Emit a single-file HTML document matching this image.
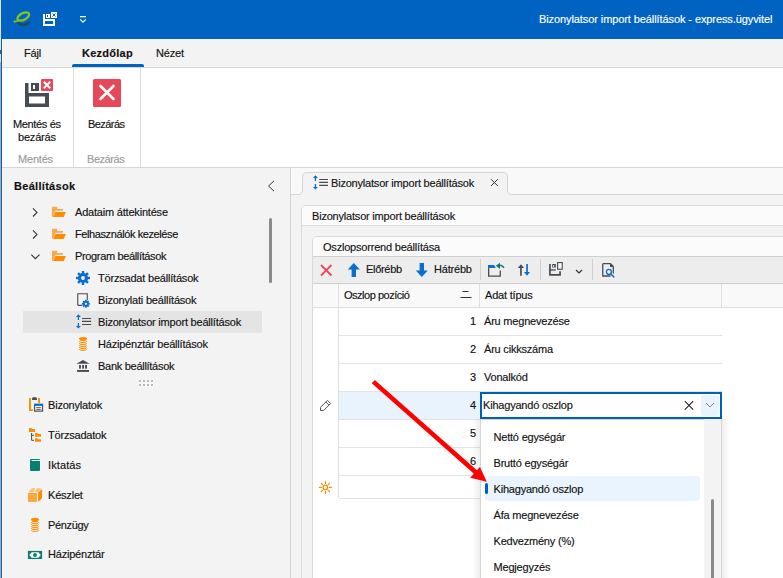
<!DOCTYPE html>
<html><head><meta charset="utf-8">
<style>
*{margin:0;padding:0;box-sizing:border-box}
html,body{width:783px;height:578px;overflow:hidden;background:#fff;font-family:"Liberation Sans",sans-serif;font-size:11px;color:#111;position:relative}
.a{position:absolute}
.t{position:absolute;white-space:nowrap;line-height:13px;letter-spacing:-0.2px;-webkit-text-stroke-width:0.15px}
svg{position:absolute;overflow:visible}
</style></head><body>
<!-- window edges -->
<div class="a" style="left:0;top:0;width:1px;height:578px;background:#a9a9a9"></div>
<div class="a" style="left:0;top:0;width:1px;height:62px;background:#e6e2dc"></div>
<div class="a" style="left:0;top:50px;width:1px;height:4px;background:#5a5550"></div>
<div class="a" style="left:1px;top:0;width:1px;height:578px;background:#0063c1"></div>
<div class="a" style="left:2px;top:39px;width:1px;height:539px;background:#fafafa"></div>
<!-- title bar -->
<div class="a" style="left:1px;top:0;width:782px;height:39px;background:#0063c1"></div>
<div class="t" style="left:539px;top:13px;color:#fff;letter-spacing:-0.09px">Bizonylatsor import beállítások - express.ügyvitel</div>
<!-- logo -->
<svg style="left:10px;top:8px" width="24" height="22" viewBox="0 0 24 22">
  <path d="M8.3 14.6 C 10.5 17.8, 16.5 18, 19.4 13.6" fill="none" stroke="#1f4a60" stroke-width="2.6"/>
  <ellipse cx="13.3" cy="8.5" rx="6.4" ry="3.3" transform="rotate(-28 13.3 8.5)" fill="none" stroke="#8cc51a" stroke-width="2.3"/>
  <path d="M4.5 13.6 L8.5 12.8" stroke="#8cc51a" stroke-width="1.4"/>
  <circle cx="4.6" cy="13.6" r="1.1" fill="#8cc51a"/>
</svg>
<!-- qat save-close -->
<svg style="left:38px;top:8px" width="24" height="22" viewBox="0 0 24 22">
  <path fill="#fff" fill-rule="evenodd" d="M5 6h2v5h10v7H5z M7 13v3h8v-3z"/>
  <path fill="#fff" fill-rule="evenodd" d="M8 6h4v4H8z M9 7v2h1V7z"/>
  <rect x="13" y="4" width="6" height="6" fill="#fff"/>
  <path d="M14.5 5.5l3 3M17.5 5.5l-3 3" stroke="#0063c1" stroke-width="1"/>
</svg>
<svg style="left:72px;top:8px" width="24" height="22" viewBox="0 0 24 22">
  <rect x="8" y="8" width="6" height="1.3" fill="#fff"/>
  <path d="M8.2 11.3l2.8 2.8 2.8-2.8" fill="none" stroke="#fff" stroke-width="1.2"/>
</svg>
<!-- tab bar -->
<div class="a" style="left:3px;top:39px;width:780px;height:28px;background:#f3f3f3"></div>
<div class="a" style="left:2px;top:67px;width:781px;height:1px;background:#d6d6d6"></div>
<div class="t" style="left:24px;top:47px">Fájl</div>
<div class="t" style="left:82px;top:47px;font-weight:bold;letter-spacing:0.25px">Kezdőlap</div>
<div class="t" style="left:156px;top:47px">Nézet</div>
<div class="a" style="left:72px;top:64px;width:72px;height:3px;background:#0063c1;border-radius:2px 2px 0 0"></div>
<!-- ribbon -->
<div class="a" style="left:3px;top:68px;width:780px;height:99px;background:#fff"></div>
<div class="a" style="left:2px;top:167px;width:781px;height:1px;background:#d6d6d6"></div>
<div class="a" style="left:73px;top:68px;width:1px;height:99px;background:#dcdcdc"></div>
<div class="a" style="left:140px;top:68px;width:1px;height:99px;background:#dcdcdc"></div>
<svg style="left:22px;top:76px" width="34" height="34" viewBox="0 0 34 34">
  <path fill="#474c52" fill-rule="evenodd" d="M3 7h3.5v10H27v14H3z M7 20.5v7h16v-7z"/>
  <path fill="#474c52" fill-rule="evenodd" d="M9 7h8v8H9z M11 9v4h2V9z"/>
  <rect x="19" y="3" width="12" height="12" rx="1" fill="#e8485a"/>
  <path d="M21.8 5.8l6.4 6.4M28.2 5.8l-6.4 6.4" stroke="#fff" stroke-width="2"/>
</svg>
<div class="t" style="left:13px;top:118px;letter-spacing:-0.35px">Mentés és</div>
<div class="t" style="left:18px;top:131px">bezárás</div>
<div class="t" style="left:18px;top:153px;color:#9a9a9a">Mentés</div>
<svg style="left:93px;top:79px" width="28" height="28" viewBox="0 0 28 28">
  <rect x="0" y="0" width="28" height="28" rx="1.5" fill="#e64759"/>
  <path d="M7.5 7l13 13M20.5 7l-13 13" stroke="#fff" stroke-width="2.6" stroke-linecap="round"/>
</svg>
<div class="t" style="left:88px;top:118px;letter-spacing:-0.55px">Bezárás</div>
<div class="t" style="left:87px;top:153px;color:#9a9a9a;letter-spacing:-0.45px">Bezárás</div>
<!-- sidebar -->
<div class="a" style="left:3px;top:168px;width:287px;height:410px;background:#f3f3f3"></div>
<div class="a" style="left:290px;top:168px;width:1px;height:410px;background:#d4d4d4"></div>
<div class="t" style="left:14px;top:180px;font-weight:bold;letter-spacing:0.3px">Beállítások</div>

<!-- sidebar tree -->
<div class="a" style="left:23px;top:311px;width:239px;height:22px;background:#e4e4e4"></div>
<svg style="left:28px;top:202px" width="16" height="66" viewBox="0 0 16 66">
  <path d="M5 6.3l4 4.1-4 4.1" fill="none" stroke="#333" stroke-width="1.1"/>
  <path d="M5 28.3l4 4.1-4 4.1" fill="none" stroke="#333" stroke-width="1.1"/>
  <path d="M3.3 52.6l4.1 4.1 4.1-4.1" fill="none" stroke="#333" stroke-width="1.1"/>
</svg>
<svg style="left:51px;top:206px" width="16" height="56" viewBox="0 0 16 56">
  <g id="fld"><path d="M1 0.8H6.2V2.9H12V4.8H4.6L2.6 9.6V10.8H1z" fill="#faa84a"/><path d="M4.4 6H15L12.7 10.9H2.2z" fill="#ff8c00"/></g>
  <use href="#fld" y="22"/><use href="#fld" y="44"/>
</svg>
<div class="t" style="left:75px;top:206px">Adataim áttekintése</div>
<div class="t" style="left:75px;top:228px;letter-spacing:-0.4px">Felhasználók kezelése</div>
<div class="t" style="left:75px;top:250px;letter-spacing:-0.35px">Program beállítások</div>
<!-- child icons -->
<svg style="left:74px;top:268px" width="20" height="108" viewBox="0 0 20 108">
  <g transform="translate(9 10)" fill="#0a6ed1">
    <circle r="5.1"/>
    <g id="tooth"><rect x="-1.2" y="-7" width="2.4" height="3"/></g>
    <use href="#tooth" transform="rotate(45)"/><use href="#tooth" transform="rotate(90)"/><use href="#tooth" transform="rotate(135)"/>
    <use href="#tooth" transform="rotate(180)"/><use href="#tooth" transform="rotate(225)"/><use href="#tooth" transform="rotate(270)"/><use href="#tooth" transform="rotate(315)"/>
    <circle r="1.9" fill="#f3f3f3"/>
  </g>
  <path d="M3.75 37.35V25.75H13.25V32.5 M3.75 37.35H8.5" fill="none" stroke="#474c52" stroke-width="1.1"/>
  <g transform="translate(11.9 35.8)" fill="#0a6ed1">
    <circle r="3.6" fill="#f3f3f3"/>
    <circle r="2.7"/>
    <rect x="-0.9" y="-3.9" width="1.8" height="7.8"/><rect x="-3.9" y="-0.9" width="7.8" height="1.8"/>
    <rect x="-0.9" y="-3.9" width="1.8" height="7.8" transform="rotate(45)"/><rect x="-0.9" y="-3.9" width="1.8" height="7.8" transform="rotate(-45)"/>
    <circle r="1.1" fill="#f3f3f3"/>
  </g>
  <!-- updown list -->
  <g>
    <path d="M4.4 48.5v3.6M4.4 54.9v3.6" stroke="#0a6ed1" stroke-width="1.3"/>
    <path d="M1.9 48.9L4.4 46.3 6.9 48.9z M1.9 58L4.4 60.6 6.9 58z" fill="#0a6ed1"/>
    <path d="M8 50.5h9.1M8 53.4h9.1M8 56.5h9.1" stroke="#474c52" stroke-width="1.2"/>
  </g>
  <!-- coins -->
  <g fill="none" stroke="#ff8c00" stroke-width="1"><ellipse cx="9" cy="81.4" rx="3.55" ry="0.95" fill="#fff"/><ellipse cx="9" cy="79.4" rx="3.55" ry="0.95" fill="#fff"/><ellipse cx="9" cy="77.4" rx="3.55" ry="0.95" fill="#fff"/><ellipse cx="9" cy="75.4" rx="3.55" ry="0.95" fill="#fff"/><ellipse cx="9" cy="73.5" rx="3.55" ry="0.95" fill="#fff"/><ellipse cx="9" cy="70.8" rx="4.05" ry="1.75" fill="#ff8c00" stroke="none"/></g>
  <!-- bank -->
  <g fill="#474c52">
    <path d="M2.4 95.8L9 91.9 15.6 95.8z"/>
    <rect x="5.1" y="97" width="1.8" height="3.7"/><rect x="8.2" y="97" width="1.8" height="3.7"/><rect x="11.1" y="97" width="1.9" height="3.7"/>
    <rect x="3" y="102" width="12" height="1.9"/>
  </g>
</svg>
<div class="t" style="left:98px;top:272px">Törzsadat beállítások</div>
<div class="t" style="left:98px;top:294px">Bizonylati beállítások</div>
<div class="t" style="left:98px;top:316px">Bizonylatsor import beállítások</div>
<div class="t" style="left:98px;top:338px">Házipénztár beállítások</div>
<div class="t" style="left:98px;top:360px;letter-spacing:-0.28px">Bank beállítások</div>
<!-- scrollbar -->
<div class="a" style="left:269px;top:218px;width:3px;height:64.5px;background:#8a8a8a;border-radius:2px"></div>
<!-- collapse chevron -->
<svg style="left:262px;top:178px" width="16" height="16" viewBox="0 0 16 16">
  <path d="M12 2.8L6.6 8l5.4 5.2" fill="none" stroke="#333" stroke-width="1"/>
</svg>
<!-- grip -->
<svg style="left:138px;top:379px" width="18" height="8" viewBox="0 0 18 8">
  <g fill="#fff"><rect x="0.5" y="0.5" width="3" height="3"/><rect x="4.5" y="0.5" width="3" height="3"/><rect x="8.5" y="0.5" width="3" height="3"/><rect x="12.5" y="0.5" width="3" height="3"/>
  <rect x="0.5" y="4.5" width="3" height="3"/><rect x="4.5" y="4.5" width="3" height="3"/><rect x="8.5" y="4.5" width="3" height="3"/><rect x="12.5" y="4.5" width="3" height="3"/></g>
  <g fill="#8f8f8f"><rect x="1.2" y="1.2" width="1.6" height="1.6"/><rect x="5.2" y="1.2" width="1.6" height="1.6"/><rect x="9.2" y="1.2" width="1.6" height="1.6"/><rect x="13.2" y="1.2" width="1.6" height="1.6"/>
  <rect x="1.2" y="5.2" width="1.6" height="1.6"/><rect x="5.2" y="5.2" width="1.6" height="1.6"/><rect x="9.2" y="5.2" width="1.6" height="1.6"/><rect x="13.2" y="5.2" width="1.6" height="1.6"/></g>
</svg>
<!-- nav -->
<svg style="left:26px;top:395px" width="20" height="170" viewBox="0 0 20 170">
  <!-- bizonylatok -->
  <g>
    <path d="M3 3h1.9v11.2h2v1.7H3z" fill="#ff8c00"/>
    <rect x="12.1" y="3" width="1.9" height="5" fill="#ff8c00"/>
    <path d="M6.1 4.9V3.4Q6.1 2.2 7.3 2.2H9.7Q10.9 2.2 10.9 3.4V4.9z" fill="#474c52"/>
    <rect x="8.6" y="9.4" width="7.9" height="6.7" fill="#fff" stroke="#474c52" stroke-width="1.2"/>
    <rect x="8" y="8.8" width="9.1" height="2.1" fill="#0a6ed1"/>
    <path d="M10.3 12.6h4.5M10.3 14.4h4.5" stroke="#474c52" stroke-width="0.9"/>
  </g>
  <!-- torzsadatok -->
  <g>
    <path d="M3 33h2.7v1H9v3H3z" fill="#ff8c00"/>
    <path d="M9 38h2.7v1H15v2.7H9z" fill="#ff8c00"/>
    <path d="M9 43.2h2.7v1H15v2.5H9z" fill="#ff8c00"/>
    <path d="M5.6 38v7.3H8M5.6 40.3H8" fill="none" stroke="#474c52" stroke-width="1"/>
  </g>
  <!-- iktatas -->
  <rect x="4" y="64" width="10" height="12.1" rx="1" fill="#078070"/>
  <path d="M5.6 65.5H14" stroke="#fff" stroke-width="0.9"/>
  <!-- keszlet -->
  <g>
    <rect x="1.9" y="98" width="9" height="8.9" fill="#ffa53a"/>
    <path d="M12.1 97.6L16.1 94V103L12.1 106.9z" fill="#ff8c00"/>
    <path d="M2.4 96.9H7.2L9.8 93.3H6z" fill="#ffbd70"/>
    <path d="M8.4 96.9H12L15.1 93.5V93.3H11z" fill="#ffbd70"/>
  </g>
  <!-- penzugy -->
  <g fill="none" stroke="#ff8c00" stroke-width="1"><ellipse cx="9" cy="135.5" rx="3.55" ry="0.95" fill="#fff"/><ellipse cx="9" cy="133.4" rx="3.55" ry="0.95" fill="#fff"/><ellipse cx="9" cy="131.4" rx="3.55" ry="0.95" fill="#fff"/><ellipse cx="9" cy="129.4" rx="3.55" ry="0.95" fill="#fff"/><ellipse cx="9" cy="127.4" rx="3.55" ry="0.95" fill="#fff"/><ellipse cx="9" cy="124.6" rx="4.05" ry="1.75" fill="#ff8c00" stroke="none"/></g>
  <!-- hazipenztar -->
  <g>
    <rect x="1.9" y="155.9" width="14.2" height="8.1" fill="#078070"/>
    <path d="M3.2 160L5.6 157.2H12.4L14.8 160L12.4 162.8H5.6z" fill="#fff"/>
    <circle cx="9" cy="160" r="1.95" fill="#078070"/>
  </g>
</svg>
<div class="t" style="left:48px;top:399px">Bizonylatok</div>
<div class="t" style="left:48px;top:429px">Törzsadatok</div>
<div class="t" style="left:48px;top:459px;letter-spacing:0.1px">Iktatás</div>
<div class="t" style="left:48px;top:489px">Készlet</div>
<div class="t" style="left:48px;top:519px;letter-spacing:-0.35px">Pénzügy</div>
<div class="t" style="left:48px;top:548px">Házipénztár</div>
<!-- main -->
<div class="a" style="left:291px;top:168px;width:492px;height:410px;background:#f9f9f9"></div>
<div class="a" style="left:291px;top:194px;width:492px;height:384px;background:#f3f3f3"></div>

<!-- doc tab -->
<svg style="left:286px;top:168px" width="230" height="30" viewBox="0 0 230 30">
  <path d="M5 26.5 H12 Q16.5 26.5 16.5 22 V9 Q16.5 4.5 21 4.5 H217 Q221.5 4.5 221.5 9 V22 Q221.5 26.5 226 26.5 H230 V40 H5z" fill="#f3f3f3"/>
  <path d="M5 26.5 H12 Q16.5 26.5 16.5 22 V9 Q16.5 4.5 21 4.5 H217 Q221.5 4.5 221.5 9 V22 Q221.5 26.5 226 26.5 H500" fill="none" stroke="#d4d4d4" stroke-width="1"/>
</svg>
<svg style="left:310px;top:173px" width="22" height="18" viewBox="0 0 22 18">
  <path d="M5.45 4.5V8M5.45 11V14.5" stroke="#0a6ed1" stroke-width="1.3"/>
  <path d="M3 4.9L5.45 2.3 7.9 4.9z M3 14.1L5.45 16.6 7.9 14.1z" fill="#0a6ed1"/>
  <path d="M9.2 6.5h8.8M9.2 9.4h8.8M9.2 12.3h8.8" stroke="#474c52" stroke-width="1.2"/>
</svg>
<div class="t" style="left:331px;top:177px">Bizonylatsor import beállítások</div>
<svg style="left:488px;top:176px" width="14" height="14" viewBox="0 0 14 14">
  <path d="M3 3.2l6.8 6.8M9.8 3.2l-6.8 6.8" stroke="#333" stroke-width="1"/>
</svg>

<div class="a" style="left:301px;top:205px;width:490px;height:380px;background:#f3f3f3;border:1px solid #d9d9d9;border-radius:5px 0 0 0"></div>
<div class="a" style="left:302px;top:206px;width:481px;height:19px;background:#fbfbfb;border-radius:4px 0 0 0"></div>
<div class="a" style="left:302px;top:225px;width:481px;height:1px;background:#dcdcdc"></div>
<div class="t" style="left:312px;top:210px">Bizonylatsor import beállítások</div>
<!-- group -->
<div class="a" style="left:312px;top:236px;width:480px;height:350px;background:#fff;border:1px solid #d9d9d9;border-radius:5px 0 0 0"></div>
<div class="a" style="left:313px;top:237px;width:470px;height:19px;background:#fbfbfb;border-radius:4px 0 0 0"></div>
<div class="a" style="left:313px;top:256px;width:470px;height:1px;background:#d0d0d0"></div>
<div class="t" style="left:323px;top:241px">Oszlopsorrend beállítása</div>
<div class="a" style="left:313px;top:257px;width:470px;height:26px;background:#ededed"></div>
<div class="a" style="left:313px;top:283px;width:470px;height:1px;background:#cfcfcf"></div>

<!-- toolbar icons -->
<svg style="left:313px;top:257px" width="320" height="26" viewBox="0 0 320 26">
  <path d="M8 8l10.5 10.5M18.5 8L8 18.5" stroke="#e8485a" stroke-width="1.8"/>
  <path d="M34.8 12.5L40.8 6l6 6.5h-3.8v7.5h-4.4v-7.5z" fill="#0a6ed1"/>
  <path d="M102.8 13.5L108.8 20l6-6.5h-3.8V6h-4.4v7.5z" fill="#0a6ed1"/>
  <rect x="167" y="0" width="1" height="0" fill="#ccc"/>
  <!-- import screen icon -->
  <path d="M175 8.1h6.5v1.4h0.9v1.4H175z" fill="#0a6ed1"/>
  <path d="M175.65 10.9v8.15h11.6v-5.65" fill="none" stroke="#474c52" stroke-width="1.3"/>
  <path d="M182.8 8.8L187 5.8v6.1z" fill="#078070"/>
  <path d="M186.5 8.3 Q189.5 8.3 191 10.9" fill="none" stroke="#0c7b6a" stroke-width="1.4"/>
  <!-- sort arrows -->
  <path d="M207.95 10.5V18.7" stroke="#474c52" stroke-width="1.7"/>
  <path d="M204.8 10.9L208 7.3 211.1 10.9z" fill="#474c52"/>
  <path d="M214.05 6.9V15" stroke="#0a6ed1" stroke-width="1.7"/>
  <path d="M210.9 15.1L214 18.7 217 15.1z" fill="#0a6ed1"/>
  <!-- layout save -->
  <path d="M236.95 7.1V17.95H247.05V14.2" fill="none" stroke="#474c52" stroke-width="1.7"/>
  <path d="M236.1 12.95H242.8" stroke="#474c52" stroke-width="1.3"/>
  <path d="M239.2 7.1h3.6v3.5h-3.6z M240.1 8.1v1.9h1V8.1z" fill="#474c52" fill-rule="evenodd"/>
  <rect x="244.65" y="5.55" width="4.6" height="6.7" fill="#f7f7f7" stroke="#474c52" stroke-width="1.1"/>
  <path d="M263 13l3 3 3-3" fill="none" stroke="#333" stroke-width="1.2"/>
  <!-- doc search -->
  <path d="M289.75 6.65H297.4L300.3 9.5V16.5 M297.5 19H289.75V6.65" fill="none" stroke="#474c52" stroke-width="1.3"/>
  <path d="M297 6.2L300.8 10H297z" fill="#474c52"/>
  <circle cx="295.9" cy="14.9" r="3.2" fill="#eee"/>
  <circle cx="295.9" cy="14.9" r="2.45" fill="none" stroke="#0a6ed1" stroke-width="1.3"/>
  <path d="M297.7 16.8L300.8 19.9" stroke="#0a6ed1" stroke-width="1.5" stroke-linecap="round"/>
</svg>
<div class="a" style="left:480px;top:259px;width:1px;height:21px;background:#cfcfcf"></div>
<div class="a" style="left:540px;top:259px;width:1px;height:21px;background:#cfcfcf"></div>
<div class="a" style="left:592px;top:259px;width:1px;height:21px;background:#cfcfcf"></div>
<div class="t" style="left:366px;top:263px;letter-spacing:-0.3px">Előrébb</div>
<div class="t" style="left:434px;top:263px">Hátrébb</div>
<!-- grid header -->
<div class="a" style="left:313px;top:284px;width:470px;height:23px;background:#f9f9f9"></div>
<div class="a" style="left:313px;top:307px;width:470px;height:1px;background:#dcdcdc"></div>
<div class="a" style="left:338px;top:284px;width:1px;height:214px;background:#e0e0e0"></div>
<div class="a" style="left:479px;top:284px;width:1px;height:23px;background:#e0e0e0"></div>
<div class="a" style="left:721px;top:284px;width:1px;height:23px;background:#e0e0e0"></div>
<div class="t" style="left:344px;top:289px;letter-spacing:-0.48px">Oszlop pozíció</div>
<div class="t" style="left:485px;top:289px">Adat típus</div>
<svg style="left:458px;top:287px" width="18" height="16" viewBox="0 0 18 16">
  <path d="M4.5 4.5h6M2.5 10.5h11" stroke="#333" stroke-width="1"/>
</svg>
<!-- rows -->
<div class="a" style="left:339px;top:392px;width:382px;height:27px;background:#e9f3fd"></div>
<div class="a" style="left:339px;top:335px;width:383px;height:1px;background:#e3e3e3"></div>
<div class="a" style="left:339px;top:363px;width:383px;height:1px;background:#e3e3e3"></div>
<div class="a" style="left:339px;top:391px;width:383px;height:1px;background:#e3e3e3"></div>
<div class="a" style="left:339px;top:419px;width:383px;height:1px;background:#e3e3e3"></div>
<div class="a" style="left:339px;top:447px;width:383px;height:1px;background:#e3e3e3"></div>
<div class="a" style="left:339px;top:475px;width:383px;height:1px;background:#e3e3e3"></div>
<div class="a" style="left:339px;top:498px;width:383px;height:1px;background:#e3e3e3"></div>
<div class="t" style="left:455px;top:315px;width:21px;text-align:right">1</div>
<div class="t" style="left:455px;top:343px;width:21px;text-align:right">2</div>
<div class="t" style="left:455px;top:371px;width:21px;text-align:right">3</div>
<div class="t" style="left:455px;top:399px;width:21px;text-align:right">4</div>
<div class="t" style="left:455px;top:427px;width:21px;text-align:right">5</div>
<div class="t" style="left:455px;top:455px;width:21px;text-align:right">6</div>
<div class="t" style="left:484px;top:315px">Áru megnevezése</div>
<div class="t" style="left:484px;top:343px">Áru cikkszáma</div>
<div class="t" style="left:484px;top:371px">Vonalkód</div>
<svg style="left:312px;top:390px" width="26" height="30" viewBox="0 0 26 30">
  <path d="M8.5 17.4V20.5H11.6L18.6 13.5L15.5 10.4Z M13.9 12L17 15.1" fill="none" stroke="#555" stroke-width="1" stroke-linejoin="miter"/>
</svg>
<svg style="left:316px;top:478px" width="18" height="18" viewBox="0 0 18 18">
  <g stroke="#ff8c00" stroke-width="1.2" fill="none" stroke-linecap="round">
    <circle cx="9.4" cy="9.4" r="2.3"/>
    <path d="M9.4 3.4v2M9.4 13.4v2M3.4 9.4h2M13.4 9.4h2M5.3 5.3l1.2 1.2M12.3 12.3l1.2 1.2M5.3 13.5l1.2-1.2M12.3 6.5l1.2-1.2"/>
  </g>
</svg>
<!-- popup -->
<div class="a" style="left:472px;top:419px;width:8px;height:159px;background:linear-gradient(to right,rgba(0,0,0,0),rgba(0,0,0,0.065))"></div>
<div class="a" style="left:722px;top:419px;width:8px;height:159px;background:linear-gradient(to left,rgba(0,0,0,0),rgba(0,0,0,0.065))"></div>
<div class="a" style="left:480px;top:419px;width:242px;height:165px;background:#fff;border:1px solid #d6d6d6"></div>
<div class="a" style="left:704px;top:419px;width:17px;height:159px;background:#f3f3f3"></div>
<div class="a" style="left:711px;top:499px;width:3px;height:80px;background:#8a8a8a;border-radius:2px"></div>
<div class="a" style="left:485px;top:476px;width:215px;height:25px;background:#eaf4fe;border-radius:4px"></div>
<div class="a" style="left:485px;top:483px;width:3px;height:11px;background:#005fb8;border-radius:2px"></div>
<div class="t" style="left:493.5px;top:430.6px">Nettó egységár</div>
<div class="t" style="left:493.5px;top:456.6px">Bruttó egységár</div>
<div class="t" style="left:493.5px;top:482.8px">Kihagyandó oszlop</div>
<div class="t" style="left:493.5px;top:509px">Áfa megnevezése</div>
<div class="t" style="left:493.5px;top:534.8px">Kedvezmény (%)</div>
<div class="t" style="left:493.5px;top:560.6px">Megjegyzés</div>
<!-- editor -->
<div class="a" style="left:480px;top:392px;width:242px;height:27px;background:#fff;border:2px solid #005fb8"></div>
<div class="t" style="left:483px;top:399px">Kihagyandó oszlop</div>
<svg style="left:682px;top:399px" width="14" height="13" viewBox="0 0 14 13">
  <path d="M2.8 2.2l8.4 8.4M11.2 2.2l-8.4 8.4" stroke="#222" stroke-width="1.1"/>
</svg>
<div class="a" style="left:701px;top:395px;width:18px;height:21px;background:#e8f3fe;border-radius:3px"></div>
<svg style="left:701px;top:395px" width="18" height="21" viewBox="0 0 18 21">
  <path d="M5 8l4 4 4-4" fill="none" stroke="#8a8a8a" stroke-width="1"/>
</svg>
<!-- red arrow -->
<svg style="left:0;top:0" width="783" height="578" viewBox="0 0 783 578">
  <path d="M373.3 381.6L476 472.5" stroke="#ff0000" stroke-width="4.6"/>
  <path d="M486.8 481.8L470.2 477.7L479.9 467z" fill="#ff0000"/>
</svg>
</body></html>
